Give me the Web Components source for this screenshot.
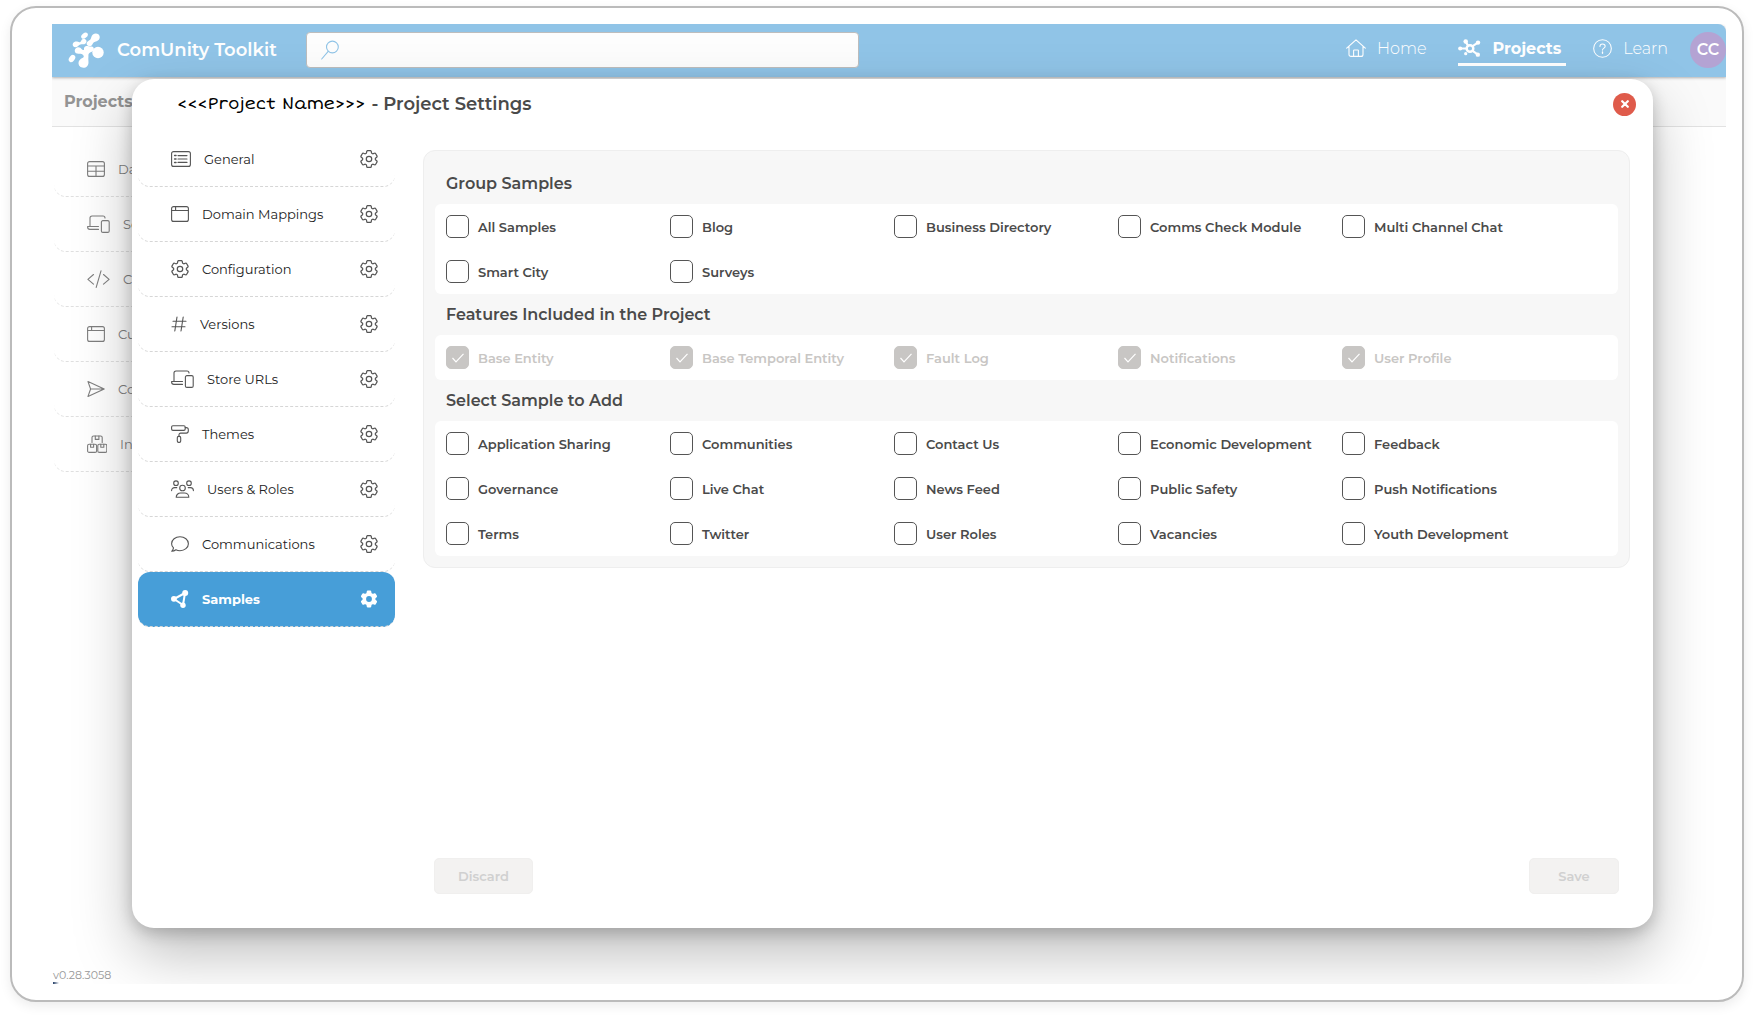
<!DOCTYPE html>
<html lang="en">
<head>
<meta charset="utf-8">
<title>ComUnity Toolkit</title>
<style>
  html, body { margin: 0; }
  body {
    min-height: 100vh;
    display: flex;
    background: #fff;
    color: #222;
    font-family: Montserrat, Inter, sans-serif;
    font-size: 13px;
    line-height: 20px;
  }
</style>
</head>
<body>
<toolkit-app></toolkit-app>

<script>
const GEAR = 'M9.594 3.94c.09-.542.56-.94 1.11-.94h2.593c.55 0 1.02.398 1.11.94l.213 1.281c.063.374.313.686.645.87.074.04.147.083.22.127.325.196.72.257 1.075.124l1.217-.456a1.125 1.125 0 0 1 1.37.49l1.296 2.247a1.125 1.125 0 0 1-.26 1.431l-1.003.827c-.293.241-.438.613-.43.992a7.723 7.723 0 0 1 0 .255c-.008.378.137.75.43.991l1.004.827c.424.35.534.955.26 1.43l-1.298 2.247a1.125 1.125 0 0 1-1.369.491l-1.217-.456c-.355-.133-.75-.072-1.076.124a6.47 6.47 0 0 1-.22.128c-.331.183-.581.495-.644.869l-.213 1.281c-.09.543-.56.94-1.11.94h-2.594c-.55 0-1.019-.398-1.11-.94l-.213-1.281c-.062-.374-.312-.686-.644-.87a6.52 6.52 0 0 1-.22-.127c-.325-.196-.72-.257-1.076-.124l-1.217.456a1.125 1.125 0 0 1-1.369-.49l-1.297-2.247a1.125 1.125 0 0 1 .26-1.431l1.004-.827c.292-.24.437-.613.43-.991a6.932 6.932 0 0 1 0-.255c.007-.38-.138-.751-.43-.992l-1.004-.827a1.125 1.125 0 0 1-.26-1.43l1.297-2.247a1.125 1.125 0 0 1 1.37-.491l1.216.456c.356.133.751.072 1.076-.124.072-.044.146-.086.22-.128.332-.183.582-.495.644-.869l.214-1.28Z';

// name: [width, height, markup, viewBox]
const ICONS = {
  gear: [18, 18, `<path d="${GEAR}" stroke-width="1.3"/><circle cx="12" cy="12" r="2.9" stroke-width="1.3"/>`, '2.4 2.4 19.2 19.2'],
  gearSolid: [18, 18, `<path class="fill" fill-rule="evenodd" d="${GEAR}M12 8.9a3.1 3.1 0 1 0 0 6.2a3.1 3.1 0 0 0 0-6.2Z"/>`, '2.4 2.4 19.2 19.2'],
  list: [20, 18, '<rect x=".6" y="1.6" width="18.8" height="14.8" rx="2"/><path d="M7 5.6h9M7 9h9M7 12.4h9"/><path d="M3.6 5.6h1.4M3.6 9h1.4M3.6 12.4h1.4" stroke-width="1.5"/>'],
  window: [18, 18, '<rect x=".6" y="1.6" width="16.8" height="14.8" rx="2"/><path d="M.6 5.5h16.8M4.6 1.6v3.9"/>'],
  hash: [16, 18, '<path d="M6 2 3.8 16M12.2 2 10 16M2 6.2h13M1 11.8h13"/>'],
  devices: [23, 18, '<path d="M3 11.500V3a2 2 0 0 1 2-2h11a2 2 0 0 1 2 2M11.500 11.500H.600v.600a2.300 2.300 0 0 0 2.300 2.300h8.600"/><rect x="14.400" y="5.600" width="7.800" height="11.800" rx="1.500"/>'],
  roller: [18, 18, '<rect x=".6" y=".8" width="13.6" height="4.600" rx="1.300"/><path d="M14.200 2.600h1.100a2 2 0 0 1 2 2v1.500a2 2 0 0 1-2 2H9.600a1.600 1.600 0 0 0-1.600 1.600v1.700"/><rect x="6.300" y="11.400" width="3.400" height="6" rx="1.300"/>'],
  users: [23, 18, '<circle cx="5" cy="3.200" r="2.300"/><circle cx="18" cy="3.200" r="2.300"/><circle cx="11.500" cy="8" r="2.800"/><path d="M5.200 17.300a4.300 4.300 0 0 1 4.300-4.300h4a4.300 4.300 0 0 1 4.300 4.300ZM.600 10.600a3 3 0 0 1 3-3h2.200M22.400 10.600a3 3 0 0 0-3-3h-2.200"/>'],
  comment: [18, 18, '<path d="M9 1.700c4.600 0 8.400 3.100 8.400 7s-3.800 7-8.400 7c-1.500 0-2.900-.3-4.100-.9-1 .8-2.400 1.500-4.200 1.500.9-.9 1.600-2.100 1.800-3.400C1.300 11.700.6 10.300.6 8.700c0-3.900 3.800-7 8.400-7Z"/>'],
  triangle: [18, 18, '<path d="M3 9 14 3 12 15Z" stroke-width="2"/><circle class="fill" cx="2.900" cy="8.800" r="2.900"/><circle class="fill" cx="14.200" cy="3" r="3"/><circle class="fill" cx="12" cy="15.200" r="2.700"/>'],
  table: [18, 18, '<rect x=".6" y="1.600" width="16.800" height="14.800" rx="2"/><path d="M.6 6h16.800M.6 11.200h16.800M9 6v10.400"/>'],
  code: [23, 18, '<path d="M6.500 4.500.900 9.300l5.600 4.800M16.500 4.500l5.600 4.800-5.600 4.800M14 .800 9.200 17.400"/>'],
  send: [18, 18, '<path d="M1 1.600 17.200 9 1 16.400 3.600 9ZM3.600 9h13.600"/>'],
  boxes: [20, 18, '<path d="M5 7.500V2.600A1.600 1.600 0 0 1 6.600 1h7a1.600 1.600 0 0 1 1.600 1.600v4.900"/><rect x=".6" y="9.200" width="9" height="8.200" rx="1.500"/><rect x="10.800" y="9.200" width="9" height="8.200" rx="1.500"/><path d="M8.300 1v3.400h3.600V1M3.600 9.200v3h3v-3M13.800 9.200v3h3v-3"/>'],
  home: [20, 18, '<path d="M.700 9.200 10 .800l9.300 8.400M3 7.300v8.100a2 2 0 0 0 2 2h10a2 2 0 0 0 2-2V7.300"/><path d="M7.600 17.400v-5.800a.6.600 0 0 1 .6-.6h3.600a.6.600 0 0 1 .6.600v5.800"/>'],
  hub: [23, 18, '<circle cx="12.500" cy="10" r="3.500" stroke-width="2.600"/><path d="M9 10H3M10.500 7 8 3M15.300 7.500 20.500 4M15.300 12.600l4.800 3.400" stroke-width="2.200"/><circle class="fill" cx="2.200" cy="10" r="2.200"/><circle class="fill" cx="8" cy="2.600" r="2.400"/><circle class="fill" cx="21" cy="3.800" r="2.300"/><circle class="fill" cx="20.800" cy="16.500" r="2.300"/><circle class="fill" cx="8" cy="15.500" r="1.700"/>', '0 0 24 19'],
  help: [19, 19, '<circle cx="10" cy="10" r="9.300"/><path d="M7.300 7.900c0-1.700 1.100-2.600 2.700-2.600s2.800.9 2.800 2.400c0 1.900-2.800 1.900-2.800 4"/><path d="M10 13.600v1.400" stroke-width="1.400"/>', '0 0 20 20'],
  search: [18, 20, '<circle cx="11.400" cy="7" r="5.900"/><path d="M7.200 11.400.700 19"/>'],
  close: [8, 8, '<path d="M1.200 1.200l5.600 5.600M6.800 1.200 1.200 6.800" stroke-width="2.200"/>'],
  logo: [36, 36, '<g class="fill"><ellipse cx="16.500" cy="3.600" rx="3.700" ry="2.500" transform="rotate(-38 16.500 3.600)"/><path d="M31.600 4.200c.6 2.500-1.300 4.800-3.800 5.300-2 .4-2.700 1.200-3.200 2.600-1 2.500-3.500 2.700-5 1.400-1.600-1.400-1.200-3.700.7-4.600 1.600-.7 2.400-1.400 2.900-3.400.6-2.600 2.400-4 4.700-4 1.900 0 3.300 1 3.700 2.700Z"/><path d="M5 11.300c1-1.900 3.300-2.300 5-1.500 1.700.8 2.500.3 3.200-1.100.8-1.600 2.600-2.400 4.100-1.500 1.700 1 1.600 3.200.2 4.300-1.200 1-2.500.8-3.800.7-1.600-.1-2.300.7-3.500 1.700-1.500 1.300-3.600 1.700-4.700.6-.8-.8-1.100-2-.5-3.200Z"/><path d="M6.800 19.300c-.4-2 1-3.800 3-4.100 2-.2 3 .8 4 2 .6.800 1.300 1 2.200.5-.3-1.700.5-3.300 2.200-3.700 1.900-.4 3 .7 4.800.5 2.100-.2 3.300 1.300 2.700 3.300-.6 2.200-2.900 2.100-4.300 3.300-1.500 1.300-.8 2.500-1 4.200-.2 2 .1 3.200.1 4.900 0 3.200-2 5.600-5.100 5.600-3 0-4.900-2.100-4.900-4.700 0-2.800 1.900-4 3.900-5.100 1.500-.8 1.900-2 .6-3.100-1.200-1-2.100-1.200-4.200-1.100-2.100.1-3.600-.6-4-2.500Z"/><ellipse cx="4" cy="26.500" rx="2.800" ry="4" transform="rotate(35 4 26.500)"/><circle cx="30" cy="20.500" r="5.700"/></g>'],
};

class TkIcon extends HTMLElement {
  constructor() {
    super();
    this.attachShadow({ mode: 'open' });
  }

  connectedCallback() {
    const [width, height, markup, viewBox] = ICONS[this.getAttribute('name')];
    this.shadowRoot.innerHTML = `
      <style>
        :host { display: inline-flex; flex: none; }
        svg {
          fill: none;
          stroke: currentColor;
          stroke-width: 1.1;
          stroke-linecap: round;
          stroke-linejoin: round;
        }
        .fill { fill: currentColor; stroke: none; }
      </style>
      <svg width="${width}" height="${height}" viewBox="${viewBox || `0 0 ${width} ${height}`}" aria-hidden="true">${markup}</svg>
    `;
  }
}

// One row of a side menu
class TkMenuItem extends HTMLElement {
  constructor() {
    super();
    this.attachShadow({ mode: 'open' });
  }

  connectedCallback() {
    const active = this.hasAttribute('active');
    const settings = this.hasAttribute('settings');
    this.shadowRoot.innerHTML = `
      <style>
        :host {
          display: flex;
          align-items: center;
          box-sizing: border-box;
          height: 55px;
          padding: 0 17px 0 33px;
          border-bottom: 1px dashed #d6d6d6;
          border-radius: 12px;
        }
        :host([active]) {
          background: #479ed8;
          color: #fff;
          font-weight: 700;
        }
        a {
          display: flex;
          flex: 1;
          align-items: center;
          gap: 13px;
          color: inherit;
          text-decoration: none;
          white-space: nowrap;
        }
        tk-icon { color: #555; }
        :host([active]) tk-icon { color: #fff; }
        button {
          display: flex;
          padding: 0;
          border: 0;
          background: none;
        }
      </style>
      <a href="#"><tk-icon name="${this.getAttribute('icon')}"></tk-icon><slot></slot></a>
      ${settings ? `<button type="button" aria-label="Settings"><tk-icon name="${active ? 'gearSolid' : 'gear'}"></tk-icon></button>` : ''}
    `;
  }
}

class TkCheckbox extends HTMLElement {
  constructor() {
    super();
    this.attachShadow({ mode: 'open' });
  }

  connectedCallback() {
    const locked = this.hasAttribute('locked');
    this.shadowRoot.innerHTML = `
      <style>
        :host {
          display: block;
          color: #4a4a4a;
          font-weight: 600;
        }
        :host([locked]) { color: #c8c6c4; }
        label {
          display: flex;
          align-items: center;
          gap: 9px;
          height: 45px;
          white-space: nowrap;
        }
        input {
          appearance: none;
          box-sizing: border-box;
          width: 23px;
          height: 23px;
          margin: 0;
          border: 1px solid #555;
          border-radius: 5px;
          background: #fff;
        }
        input:checked {
          border-color: #c8c6c4;
          background: #c8c6c4 url('data:image/svg+xml,<svg xmlns="http://www.w3.org/2000/svg" width="14" height="12" fill="none" stroke="white" stroke-width="1.2"><path d="M1.500 6 5 9.800 12.500 1.800"/></svg>') center no-repeat;
        }
      </style>
      <label><input type="checkbox" ${locked ? 'checked disabled' : ''}><slot></slot></label>
    `;
  }
}

class TkSampleGroup extends HTMLElement {
  constructor() {
    super();
    this.attachShadow({ mode: 'open' });
  }

  connectedCallback() {
    const items = this.getAttribute('items').split(',');
    const locked = this.hasAttribute('locked') ? 'locked' : '';
    this.shadowRoot.innerHTML = `
      <style>
        :host { display: block; }
        h3 {
          margin: 0;
          padding-left: 11px;
          color: #4a4a4a;
          font-size: 16px;
          font-weight: 600;
          line-height: 41px;
        }
        div {
          display: grid;
          grid-template-columns: repeat(auto-fill, 224px);
          padding: 0 11px;
          border-radius: 6px;
          background: #fff;
        }
      </style>
      <h3>${this.getAttribute('heading')}</h3>
      <div>${items.map(item => `<tk-checkbox ${locked}>${item}</tk-checkbox>`).join('')}</div>
    `;
  }
}

class TkHeader extends HTMLElement {
  constructor() {
    super();
    this.attachShadow({ mode: 'open' });
  }

  connectedCallback() {
    this.shadowRoot.innerHTML = `
      <style>
        :host {
          display: flex;
          align-items: center;
          box-sizing: border-box;
          height: 53px;
          padding: 0 0 2px 16px;
          border-radius: 0 8px 0 0;
          background: #90c4e7;
          box-shadow: 0 1px 3px rgba(0, 0, 0, .3);
          color: #fff;
        }
        .brand {
          box-sizing: border-box;
          width: 202px;
          padding-left: 13px;
          font-size: 18px;
          font-weight: 600;
          white-space: nowrap;
        }
        .search {
          display: flex;
          align-items: center;
          box-sizing: border-box;
          width: 553px;
          height: 36px;
          padding-left: 14px;
          border: 1px solid #bdbdbd;
          border-radius: 4px;
          background: #fdfdfd;
          color: #90c4e7;
        }
        input {
          flex: 1;
          height: 32px;
          border: 0;
          background: none;
          font: inherit;
          outline: 0;
        }
        nav {
          display: flex;
          align-items: center;
          gap: 27px;
          margin-left: auto;
          font-size: 16px;
          font-weight: 300;
        }
        a {
          display: flex;
          align-items: center;
          gap: 11px;
          padding-right: 5px;
          border-bottom: 3px solid transparent;
          color: #fff;
          line-height: 29px;
          text-decoration: none;
        }
        a.current {
          border-color: #fff;
          font-weight: 700;
        }
        .avatar {
          width: 36px;
          height: 36px;
          margin-left: 17px;
          padding: 0;
          border: 0;
          border-radius: 50%;
          background: #b4a3d3;
          color: #fff;
          font: 600 16px Montserrat, Inter, sans-serif;
        }
      </style>
      <tk-icon name="logo"></tk-icon>
      <span class="brand">ComUnity Toolkit</span>
      <label class="search"><tk-icon name="search"></tk-icon><input type="search" aria-label="Search"></label>
      <nav>
        <a href="#"><tk-icon name="home"></tk-icon>Home</a>
        <a href="#" class="current"><tk-icon name="hub"></tk-icon>Projects</a>
        <a href="#"><tk-icon name="help"></tk-icon>Learn</a>
      </nav>
      <button class="avatar" type="button">CC</button>
    `;
  }
}

class TkProjectSettings extends HTMLElement {
  constructor() {
    super();
    this.attachShadow({ mode: 'open' });
  }

  connectedCallback() {
    this.shadowRoot.innerHTML = `
      <style>
        :host {
          display: grid;
          grid-template: 53px 1fr / 257px 1fr;
          column-gap: 28px;
          box-sizing: border-box;
          padding-left: 6px;
          border-radius: 22px;
          background: #fff;
          box-shadow: 0 26px 58px rgba(0, 0, 0, .26), 0 5px 16px rgba(0, 0, 0, .2);
        }
        header {
          display: flex;
          grid-column: 1 / -1;
          align-items: center;
          gap: 6px;
          height: 50px;
          padding: 0 17px 0 39px;
        }
        .name {
          color: #000;
          font-family: "Short Stack", "Comic Neue", "DejaVu Sans", sans-serif;
          font-size: 17px;
        }
        h2 {
          margin: 0;
          color: #4a4a4a;
          font-size: 18px;
          font-weight: 600;
        }
        .close {
          display: flex;
          align-items: center;
          justify-content: center;
          width: 23px;
          height: 23px;
          margin-left: auto;
          padding: 0;
          border: 0;
          border-radius: 50%;
          background: #df5b4b;
          color: #fff;
        }
        main {
          display: flex;
          flex-direction: column;
          padding: 18px 23px 34px 0;
        }
        section {
          padding: 12px 11px 11px;
          border: 1px solid #eee;
          border-radius: 12px;
          background: #f7f7f7;
        }
        footer {
          display: flex;
          justify-content: space-between;
          margin-top: auto;
          padding: 0 11px;
        }
        footer button {
          min-width: 90px;
          height: 36px;
          padding: 0 23px;
          border: 1px solid #f0efee;
          border-radius: 5px;
          background: #f3f2f1;
          color: #d0d0d0;
          font: 600 13px Montserrat, Inter, sans-serif;
        }
      </style>
      <header>
        <span class="name">&lt;&lt;&lt;Project Name&gt;&gt;&gt;</span>
        <h2>- Project Settings</h2>
        <button class="close" type="button" aria-label="Close"><tk-icon name="close"></tk-icon></button>
      </header>
      <nav>
        <tk-menu-item settings icon="list">General</tk-menu-item>
        <tk-menu-item settings icon="window">Domain Mappings</tk-menu-item>
        <tk-menu-item settings icon="gear">Configuration</tk-menu-item>
        <tk-menu-item settings icon="hash">Versions</tk-menu-item>
        <tk-menu-item settings icon="devices">Store URLs</tk-menu-item>
        <tk-menu-item settings icon="roller">Themes</tk-menu-item>
        <tk-menu-item settings icon="users">Users &amp; Roles</tk-menu-item>
        <tk-menu-item settings icon="comment">Communications</tk-menu-item>
        <tk-menu-item settings icon="triangle" active>Samples</tk-menu-item>
      </nav>
      <main>
        <section>
          <tk-sample-group heading="Group Samples" items="All Samples,Blog,Business Directory,Comms Check Module,Multi Channel Chat,Smart City,Surveys"></tk-sample-group>
          <tk-sample-group locked heading="Features Included in the Project" items="Base Entity,Base Temporal Entity,Fault Log,Notifications,User Profile"></tk-sample-group>
          <tk-sample-group heading="Select Sample to Add" items="Application Sharing,Communities,Contact Us,Economic Development,Feedback,Governance,Live Chat,News Feed,Public Safety,Push Notifications,Terms,Twitter,User Roles,Vacancies,Youth Development"></tk-sample-group>
        </section>
        <footer>
          <button type="button" disabled>Discard</button>
          <button type="button" disabled>Save</button>
        </footer>
      </main>
    `;
  }
}

class ToolkitApp extends HTMLElement {
  constructor() {
    super();
    this.attachShadow({ mode: 'open' });
  }

  connectedCallback() {
    this.shadowRoot.innerHTML = `
      <style>
        :host {
          display: flex;
          flex: 1;
          box-sizing: border-box;
          margin: 6px 10px 14px;
          padding: 16px 16px 16px 40px;
          border: 2px solid #bbb;
          border-radius: 26px;
          box-shadow: 0 4px 12px rgba(0, 0, 0, .08);
        }
        .page {
          position: relative;
          display: flex;
          flex: 1;
          flex-direction: column;
          overflow: hidden;
        }
        .crumb {
          padding: 0 12px;
          border-bottom: 1px solid #e2e2e2;
          background: #fafafa;
          color: #949494;
          font-size: 16px;
          font-weight: 700;
          line-height: 49px;
        }
        tk-header { position: relative; }
        .menu {
          width: 257px;
          margin-top: 15px;
          padding-left: 2px;
          color: #555;
          opacity: .75;
        }
        .version {
          margin-top: auto;
          padding-left: 1px;
          color: #999;
          font-size: 11px;
          line-height: 14px;
        }
        /* corner of the browser's link preview */
        .version::after {
          content: "";
          display: block;
          width: 6px;
          height: 2px;
          background: linear-gradient(90deg, #1f3a63, transparent);
        }
        /* dialog lies over the page */
        tk-project-settings {
          position: absolute;
          inset: 55px 73px 56px 80px;
        }
      </style>
      <div class="page">
        <tk-header></tk-header>
        <div class="crumb">Projects</div>
        <nav class="menu">
          <tk-menu-item icon="table">Da</tk-menu-item>
          <tk-menu-item icon="devices">Se</tk-menu-item>
          <tk-menu-item icon="code">C</tk-menu-item>
          <tk-menu-item icon="window">Cu</tk-menu-item>
          <tk-menu-item icon="send">Co</tk-menu-item>
          <tk-menu-item icon="boxes">In</tk-menu-item>
        </nav>
        <div class="version">v0.28.3058</div>
        <tk-project-settings role="dialog" aria-label="Project Settings"></tk-project-settings>
      </div>
    `;
  }
}

customElements.define('tk-icon', TkIcon);
customElements.define('tk-menu-item', TkMenuItem);
customElements.define('tk-checkbox', TkCheckbox);
customElements.define('tk-sample-group', TkSampleGroup);
customElements.define('tk-header', TkHeader);
customElements.define('tk-project-settings', TkProjectSettings);
customElements.define('toolkit-app', ToolkitApp);
</script>
</body>
</html>
